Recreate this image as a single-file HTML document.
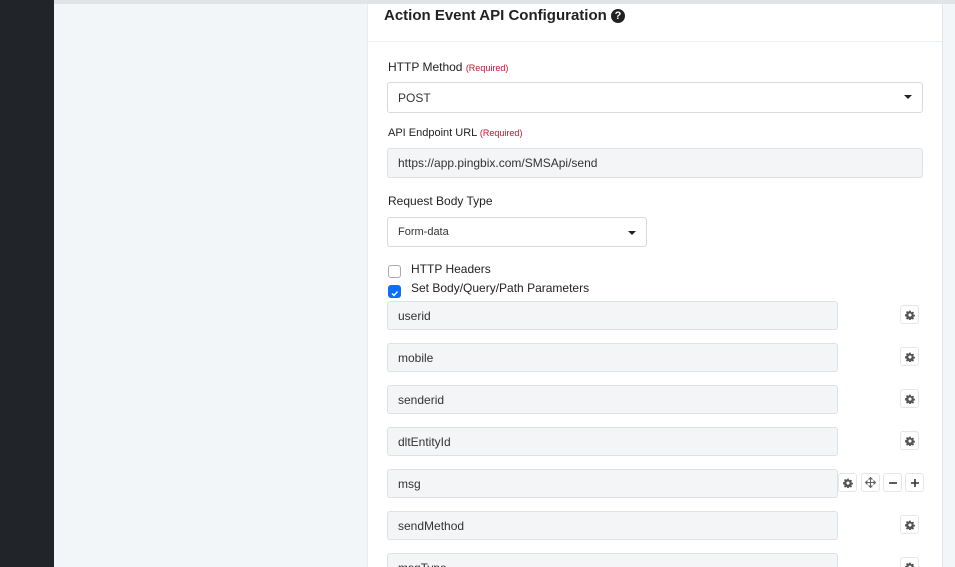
<!DOCTYPE html>
<html style="width:955px;height:567px;overflow:hidden"><head><style>
*{box-sizing:border-box;margin:0;padding:0}
body{width:955px;height:567px;overflow:hidden;background:#f3f6f9;font-family:"Liberation Sans",sans-serif;color:#212529;position:relative}
.a{position:absolute}
.side{left:0;top:0;width:54px;height:567px;background:#212529}
.topl{left:0;top:0;width:955px;height:4px;background:#e1e3e6}
.card{left:367px;top:4px;width:576px;height:563px;background:#fff;border-left:1px solid #e8ebef;border-right:1px solid #e3e6ea}
.hdr{left:368px;top:4px;width:574px;height:38px;border-bottom:1px solid #edf0f3}
.t{font-size:15px;font-weight:bold;color:#222}
.lbl{font-size:12px;color:#222}
.req{font-size:9px;color:#c8102e}
.in{border:1px solid #d6dade;border-radius:3px;font-size:12px;padding-left:10px;display:flex;align-items:center;color:#333}
.gray{background:#f3f5f7;border-color:#dee2e6}
.caret{position:absolute;right:10px;top:12px;width:0;height:0;border-left:4px solid transparent;border-right:4px solid transparent;border-top:4px solid #222}
.btn{width:19px;height:19px;border:1px solid #e4e6e9;border-radius:3px;background:#fff;display:flex;align-items:center;justify-content:center;color:#555;font-size:11px}
.cb{width:13px;height:13px;border:1px solid #aaa;border-radius:3px;background:#fff}
.cbon{background:#0d6efd;border-color:#0d6efd}
</style></head><body>
<svg width="0" height="0" style="position:absolute"><defs><symbol id="g" viewBox="0 0 16 16"><path fill="#555" d="M6.8 1h2.4l.4 2 1.4.6 1.7-1.1 1.7 1.7-1.1 1.7.6 1.4 2 .4v2.4l-2 .4-.6 1.4 1.1 1.7-1.7 1.7-1.7-1.1-1.4.6-.4 2H6.8l-.4-2-1.4-.6-1.7 1.1-1.7-1.7 1.1-1.7-.6-1.4-2-.4V6.8l2-.4.6-1.4-1.1-1.7 1.7-1.7 1.7 1.1 1.4-.6zM8 5.5a2.5 2.5 0 100 5 2.5 2.5 0 000-5z"/></symbol></defs></svg>
<div class="a topl"></div>
<div class="a side"></div>
<div class="a card"></div>
<div class="a hdr"></div>
<div class="a t" style="left:384px;top:7px">Action Event API Configuration <span style="display:inline-block;width:14px;height:14px;border-radius:50%;background:#222;color:#fff;font-size:11px;text-align:center;line-height:14px;vertical-align:1px">?</span></div>

<div class="a lbl" style="left:388px;top:60px">HTTP Method <span class="req">(Required)</span></div>
<div class="a in" style="left:387px;top:82px;width:536px;height:31px">POST<div class="caret"></div></div>

<div class="a lbl" style="left:388px;top:127px;font-size:11px">API Endpoint URL <span class="req">(Required)</span></div>
<div class="a in gray" style="left:387px;top:148px;width:536px;height:30px">https://app.pingbix.com/SMSApi/send</div>

<div class="a lbl" style="left:388px;top:194px">Request Body Type</div>
<div class="a in" style="left:387px;top:217px;width:260px;height:30px;font-size:11px">Form-data<div class="caret" style="top:13px"></div></div>

<div class="a cb" style="left:388px;top:265px"></div>
<div class="a lbl" style="left:411px;top:262px">HTTP Headers</div>
<div class="a cb cbon" style="left:388px;top:285px"><svg width="11" height="11" viewBox="0 0 11 11"><path d="M3 5.5l2 2 3.5-4" stroke="#fff" stroke-width="1.4" fill="none"/></svg></div>
<div class="a lbl" style="left:411px;top:281px">Set Body/Query/Path Parameters</div>

<div class="a in gray" style="left:387px;top:301px;width:451px;height:29px">userid</div>
<div class="a in gray" style="left:387px;top:343px;width:451px;height:29px">mobile</div>
<div class="a in gray" style="left:387px;top:385px;width:451px;height:29px">senderid</div>
<div class="a in gray" style="left:387px;top:427px;width:451px;height:29px">dltEntityId</div>
<div class="a in gray" style="left:387px;top:469px;width:451px;height:29px">msg</div>
<div class="a in gray" style="left:387px;top:511px;width:451px;height:29px">sendMethod</div>
<div class="a in gray" style="left:387px;top:553px;width:451px;height:29px">msgType</div>

<div class="a btn" style="left:900px;top:305px"><svg width="10" height="10"><use href="#g"/></svg></div>
<div class="a btn" style="left:900px;top:347px"><svg width="10" height="10"><use href="#g"/></svg></div>
<div class="a btn" style="left:900px;top:389px"><svg width="10" height="10"><use href="#g"/></svg></div>
<div class="a btn" style="left:900px;top:431px"><svg width="10" height="10"><use href="#g"/></svg></div>
<div class="a btn" style="left:838px;top:473px"><svg width="10" height="10"><use href="#g"/></svg></div>
<div class="a btn" style="left:861px;top:473px"><svg width="11" height="11" viewBox="0 0 11 11"><path d="M5.5 1v9M1 5.5h9M5.5 0.5l-1.5 1.5h3zM5.5 10.5l-1.5-1.5h3zM0.5 5.5l1.5-1.5v3zM10.5 5.5l-1.5-1.5v3z" stroke="#666" stroke-width="1" fill="#666"/></svg></div>
<div class="a btn" style="left:883px;top:473px"><svg width="10" height="10"><path d="M1 5h8" stroke="#333" stroke-width="1.6"/></svg></div>
<div class="a btn" style="left:905px;top:473px"><svg width="10" height="10"><path d="M1 5h8M5 1v8" stroke="#333" stroke-width="1.6"/></svg></div>
<div class="a btn" style="left:900px;top:515px"><svg width="10" height="10"><use href="#g"/></svg></div>
<div class="a btn" style="left:900px;top:557px"><svg width="10" height="10"><use href="#g"/></svg></div>
</body></html>
